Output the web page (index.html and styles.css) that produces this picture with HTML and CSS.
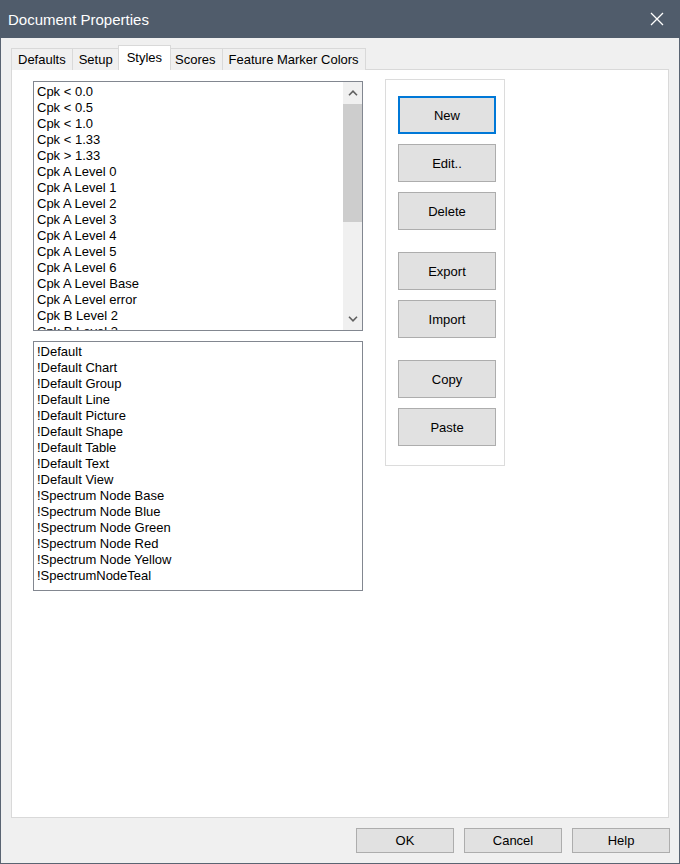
FILE: index.html
```html
<!DOCTYPE html>
<html lang="en">
<head>
    <meta charset="UTF-8">
    <title>Document Properties</title>
    <link rel="stylesheet" href="styles.css">
</head>
<body>
    <div class="window">
        <div class="titlebar">
            <span class="title">Document Properties</span>
            <svg class="close" width="14" height="14" viewBox="0 0 14 14">
                <path d="M1 1 L13 13 M13 1 L1 13" stroke="#fff" stroke-width="1.3" fill="none"/>
            </svg>
        </div>

        <div class="dialog-body">
            <div class="tabs">
                <div class="tab">Defaults</div>
                <div class="tab">Setup</div>
                <div class="tab active">Styles</div>
                <div class="tab">Scores</div>
                <div class="tab">Feature Marker Colors</div>
            </div>

            <div class="panel">
                <div class="lists">
                    <div class="listbox">
                        <div class="items">
                            <div class="item">Cpk &lt; 0.0</div>
                            <div class="item">Cpk &lt; 0.5</div>
                            <div class="item">Cpk &lt; 1.0</div>
                            <div class="item">Cpk &lt; 1.33</div>
                            <div class="item">Cpk &gt; 1.33</div>
                            <div class="item">Cpk A Level 0</div>
                            <div class="item">Cpk A Level 1</div>
                            <div class="item">Cpk A Level 2</div>
                            <div class="item">Cpk A Level 3</div>
                            <div class="item">Cpk A Level 4</div>
                            <div class="item">Cpk A Level 5</div>
                            <div class="item">Cpk A Level 6</div>
                            <div class="item">Cpk A Level Base</div>
                            <div class="item">Cpk A Level error</div>
                            <div class="item">Cpk B Level 2</div>
                            <div class="item">Cpk B Level 3</div>
                        </div>
                        <div class="scrollbar">
                            <div class="arrow">
                                <svg width="10" height="6" viewBox="0 0 10 6"><path d="M1 5.2 L5 1.2 L9 5.2" stroke="#606060" stroke-width="1.6" fill="none"/></svg>
                            </div>
                            <div class="track"><div class="thumb"></div></div>
                            <div class="arrow">
                                <svg width="10" height="6" viewBox="0 0 10 6"><path d="M1 0.8 L5 4.8 L9 0.8" stroke="#606060" stroke-width="1.6" fill="none"/></svg>
                            </div>
                        </div>
                    </div>

                    <div class="listbox">
                        <div class="items">
                            <div class="item">!Default</div>
                            <div class="item">!Default Chart</div>
                            <div class="item">!Default Group</div>
                            <div class="item">!Default Line</div>
                            <div class="item">!Default Picture</div>
                            <div class="item">!Default Shape</div>
                            <div class="item">!Default Table</div>
                            <div class="item">!Default Text</div>
                            <div class="item">!Default View</div>
                            <div class="item">!Spectrum Node Base</div>
                            <div class="item">!Spectrum Node Blue</div>
                            <div class="item">!Spectrum Node Green</div>
                            <div class="item">!Spectrum Node Red</div>
                            <div class="item">!Spectrum Node Yellow</div>
                            <div class="item">!SpectrumNodeTeal</div>
                        </div>
                    </div>
                </div>

                <div class="button-group">
                    <button class="btn default">New</button>
                    <button class="btn">Edit..</button>
                    <button class="btn">Delete</button>
                    <button class="btn spaced">Export</button>
                    <button class="btn">Import</button>
                    <button class="btn spaced">Copy</button>
                    <button class="btn">Paste</button>
                </div>
            </div>
        </div>

        <div class="footer">
            <button class="btn small">OK</button>
            <button class="btn small">Cancel</button>
            <button class="btn small">Help</button>
        </div>
    </div>
</body>
</html>
```

FILE: styles.css
```css
body {
    margin: 0;
    padding: 0;
    background: #f0f0f0;
    font-family: "Liberation Sans", Arial, sans-serif;
    font-size: 13px;
    color: #000;
}

.window {
    width: 680px;
    height: 864px;
    box-sizing: border-box;
    border: 1px solid #5a6472;
    border-top: none;
    background: #f0f0f0;
    display: flex;
    flex-direction: column;
}

/* Title bar */
.titlebar {
    height: 38px;
    margin: 0 -1px;
    background: #505c6b;
    color: #fff;
    display: flex;
    align-items: center;
    justify-content: space-between;
    padding: 0 16px 0 8px;
    flex-shrink: 0;
}

.title {
    font-size: 15px;
}

.close {
    display: block;
}

.dialog-body {
    padding: 7px 0 0 10px;
}

/* Tabs */
.tabs {
    display: flex;
    align-items: flex-end;
    height: 25px;
    margin-bottom: -1px;
    position: relative;
    z-index: 1;
}

.tab {
    height: 22px;
    box-sizing: border-box;
    line-height: 22px;
    padding: 0 6px;
    border: 1px solid #d9d9d9;
    border-bottom: none;
    background: #f0f0f0;
    margin-left: -1px;
}

.tab:first-child {
    margin-left: 0;
}

.tab.active {
    height: 25px;
    line-height: 23px;
    background: #fff;
    margin: 0 -2px 0 -2px;
    padding: 0 8px;
    position: relative;
    z-index: 2;
}

.panel {
    width: 658px;
    height: 749px;
    box-sizing: border-box;
    background: #fff;
    border: 1px solid #d9d9d9;
    padding: 9px 0 0 21px;
    display: flex;
    align-items: flex-start;
}

/* List boxes */
.lists {
    margin-top: 2px;
    display: flex;
    flex-direction: column;
    gap: 10px;
}

.listbox {
    width: 330px;
    height: 250px;
    box-sizing: border-box;
    border: 1px solid #828790;
    display: flex;
    overflow: hidden;
}

.items {
    flex: 1;
    padding: 2px 0 0 3px;
    overflow: hidden;
}

.item {
    height: 16px;
    line-height: 16px;
    white-space: nowrap;
}

.scrollbar {
    width: 19px;
    background: #f0f0f0;
    display: flex;
    flex-direction: column;
}

.arrow {
    height: 22px;
    display: flex;
    align-items: center;
    justify-content: center;
}

.track {
    flex: 1;
}

.thumb {
    height: 118px;
    background: #cdcdcd;
}

/* Buttons */
.button-group {
    margin-left: 22px;
    width: 120px;
    box-sizing: border-box;
    border: 1px solid #dcdcdc;
    padding: 16px 0 19px 12px;
    display: flex;
    flex-direction: column;
    gap: 10px;
}

.btn {
    width: 98px;
    height: 38px;
    box-sizing: border-box;
    background: #e1e1e1;
    border: 1px solid #adadad;
    font-family: "Liberation Sans", Arial, sans-serif;
    font-size: 13px;
    color: #000;
    padding: 0;
}

.btn.default {
    border: 2px solid #0078d7;
}

.btn.spaced {
    margin-top: 12px;
}

.footer {
    display: flex;
    justify-content: flex-end;
    gap: 10px;
    padding: 10px 9px 0 0;
}

.btn.small {
    height: 25px;
}
```
